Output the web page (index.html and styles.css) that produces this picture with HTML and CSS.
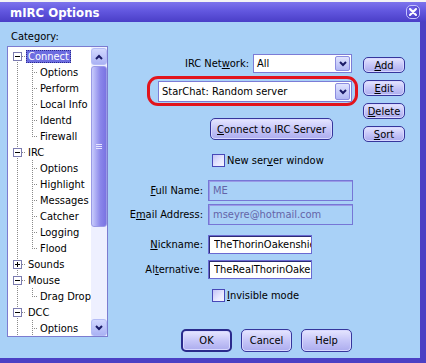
FILE: index.html
```html
<!DOCTYPE html>
<html lang="en">
<head>
  <meta charset="UTF-8" />
  <meta name="viewport" content="width=device-width, initial-scale=1" />
  <title>mIRC Options</title>
  <link rel="stylesheet" href="styles.css">
</head>
<body>

  <div class="window">
    <div class="titlebar">
      <span class="title">mIRC Options</span>
      <span class="close-btn">
        <svg width="8" height="8" viewBox="0 0 8 8"><path d="M1 1L7 7M7 1L1 7" stroke="#fff" stroke-width="2" stroke-linecap="round"/></svg>
      </span>
    </div>

    <div class="content">
      <!-- Lista de categorias -->
      <div class="category">
        <div class="cat-label">Category:</div>
        <div class="tree">
          <ul class="tree-list">
            <li class="node first"><span class="gutter"><svg class="toggle" width="9" height="9" viewBox="0 0 9 9"><rect x="0.5" y="0.5" width="8" height="8" fill="#fff" stroke="#7c7cb0"/><path d="M2 4.5h5" stroke="#000"/></svg></span><span class="label selected">Connect</span></li>
            <li class="leaf"><span class="gutter"></span><span class="branch"></span><span class="label">Options</span></li>
            <li class="leaf"><span class="gutter"></span><span class="branch"></span><span class="label">Perform</span></li>
            <li class="leaf"><span class="gutter"></span><span class="branch"></span><span class="label">Local Info</span></li>
            <li class="leaf"><span class="gutter"></span><span class="branch"></span><span class="label">Identd</span></li>
            <li class="leaf last"><span class="gutter"></span><span class="branch"></span><span class="label">Firewall</span></li>
            <li class="node"><span class="gutter"><svg class="toggle" width="9" height="9" viewBox="0 0 9 9"><rect x="0.5" y="0.5" width="8" height="8" fill="#fff" stroke="#7c7cb0"/><path d="M2 4.5h5" stroke="#000"/></svg></span><span class="label">IRC</span></li>
            <li class="leaf"><span class="gutter"></span><span class="branch"></span><span class="label">Options</span></li>
            <li class="leaf"><span class="gutter"></span><span class="branch"></span><span class="label">Highlight</span></li>
            <li class="leaf"><span class="gutter"></span><span class="branch"></span><span class="label">Messages</span></li>
            <li class="leaf"><span class="gutter"></span><span class="branch"></span><span class="label">Catcher</span></li>
            <li class="leaf"><span class="gutter"></span><span class="branch"></span><span class="label">Logging</span></li>
            <li class="leaf last"><span class="gutter"></span><span class="branch"></span><span class="label">Flood</span></li>
            <li class="node"><span class="gutter"><svg class="toggle" width="9" height="9" viewBox="0 0 9 9"><rect x="0.5" y="0.5" width="8" height="8" fill="#fff" stroke="#7c7cb0"/><path d="M2 4.5h5M4.5 2v5" stroke="#000"/></svg></span><span class="label">Sounds</span></li>
            <li class="node"><span class="gutter"><svg class="toggle" width="9" height="9" viewBox="0 0 9 9"><rect x="0.5" y="0.5" width="8" height="8" fill="#fff" stroke="#7c7cb0"/><path d="M2 4.5h5" stroke="#000"/></svg></span><span class="label">Mouse</span></li>
            <li class="leaf last"><span class="gutter"></span><span class="branch"></span><span class="label">Drag Drop</span></li>
            <li class="node"><span class="gutter"><svg class="toggle" width="9" height="9" viewBox="0 0 9 9"><rect x="0.5" y="0.5" width="8" height="8" fill="#fff" stroke="#7c7cb0"/><path d="M2 4.5h5" stroke="#000"/></svg></span><span class="label">DCC</span></li>
            <li class="leaf"><span class="gutter"></span><span class="branch"></span><span class="label">Options</span></li>
          </ul>
          <div class="scrollbar">
            <span class="scroll-btn">
              <svg width="8" height="6" viewBox="0 0 8 6"><path d="M1 5L4 2L7 5" fill="none" stroke="#1a1a66" stroke-width="2"/></svg>
            </span>
            <span class="thumb">
              <svg width="6" height="5" viewBox="0 0 6 5"><path d="M0 0.5h6M0 2.5h6M0 4.5h6" stroke="#e6e6ff"/></svg>
            </span>
            <span class="track"></span>
            <span class="scroll-btn">
              <svg width="8" height="6" viewBox="0 0 8 6"><path d="M1 1L4 4L7 1" fill="none" stroke="#1a1a66" stroke-width="2"/></svg>
            </span>
          </div>
        </div>
      </div>

      <!-- Painel de conexão -->
      <div class="pane">
        <div class="top-section">
          <div class="server-area">
            <div class="net-row">
              <span>IRC Net<u>w</u>ork:</span>
              <div class="combo network">
                <span class="combo-text">All</span>
                <span class="combo-btn"><svg width="8" height="6" viewBox="0 0 8 6"><path d="M1 1L4 4L7 1" fill="none" stroke="#1a1a66" stroke-width="2"/></svg></span>
              </div>
            </div>
            <div class="red-box">
              <div class="combo server">
                <span class="combo-text">StarChat: Random server</span>
                <span class="combo-btn"><svg width="8" height="6" viewBox="0 0 8 6"><path d="M1 1L4 4L7 1" fill="none" stroke="#1a1a66" stroke-width="2"/></svg></span>
              </div>
            </div>
            <button class="btn connect-btn"><u>C</u>onnect to IRC Server</button>
          </div>
          <div class="side-buttons">
            <button class="btn small"><u>A</u>dd</button>
            <button class="btn small"><u>E</u>dit</button>
            <button class="btn small"><u>D</u>elete</button>
            <button class="btn small"><u>S</u>ort</button>
          </div>
        </div>

        <div class="check-row server-window">
          <span class="checkbox"></span>
          <span>New ser<u>v</u>er window</span>
        </div>

        <div class="field-row full-name">
          <label><u>F</u>ull Name:</label>
          <input class="input disabled" type="text" value="ME" disabled />
        </div>
        <div class="field-row email">
          <label>E<u>m</u>ail Address:</label>
          <input class="input disabled" type="text" value="mseyre@hotmail.com" disabled />
        </div>
        <div class="field-row nickname">
          <label><u>N</u>ickname:</label>
          <input class="input" type="text" value="TheThorinOakenshield" />
        </div>
        <div class="field-row alternative">
          <label>Al<u>t</u>ernative:</label>
          <input class="input" type="text" value="TheRealThorinOakenshield" />
        </div>

        <div class="check-row invisible">
          <span class="checkbox"></span>
          <span><u>I</u>nvisible mode</span>
        </div>

        <div class="dialog-buttons">
          <button class="btn dialog default">OK</button>
          <button class="btn dialog">Cancel</button>
          <button class="btn dialog">Help</button>
        </div>
      </div>
    </div>
  </div>

</body>
</html>
```

FILE: styles.css
```css
body {
  margin: 0;
  background: #f4f4f4;
  font-family: Tahoma, "DejaVu Sans Condensed", "DejaVu Sans", sans-serif;
  font-size: 11px;
  color: #000;
}
.window {
  width: 426px;
  height: 361px;
  margin-top: 2px;
  display: flex;
  flex-direction: column;
}
.titlebar {
  height: 20px;
  flex-shrink: 0;
  display: flex;
  align-items: center;
  padding: 0 6px 0 10px;
  background: linear-gradient(to bottom, #7d74ec 0%, #6257df 45%, #4a3ec7 100%);
}
.title {
  color: #fff;
  font-weight: bold;
  font-size: 13px;
}
.close-btn {
  margin-left: auto;
  width: 12px;
  height: 12px;
  display: flex;
  align-items: center;
  justify-content: center;
  border: 1px solid #c4c4ff;
  border-radius: 5px;
  background: radial-gradient(circle at 40% 35%, #7a6ef2, #3b2db8);
}
.content {
  flex: 1;
  display: flex;
  background: #a9d1f7;
  border-right: 6px solid #4b40c4;
  border-bottom: 5px solid #4b40c4;
}

/* Categorias */
.category {
  padding-left: 7px;
  width: 101px;
}
.cat-label {
  padding: 8px 0 3px 4px;
  line-height: 13px;
}
.tree {
  height: 291px;
  box-sizing: border-box;
  border: 1px solid #7c7cd0;
  background: #fff;
  display: flex;
}
.tree-list {
  list-style: none;
  margin: 0;
  padding: 1px 0 0 0;
  flex: 1;
  overflow: hidden;
}
.tree-list li {
  display: flex;
  height: 16px;
  white-space: nowrap;
}
.gutter {
  width: 18px;
  height: 16px;
  flex-shrink: 0;
  box-sizing: border-box;
}
.node .gutter {
  padding: 4px 0 0 5px;
  background:
    repeating-linear-gradient(to bottom, #8a8a8a 0 1px, transparent 1px 2px) 9px 0 / 1px 100% no-repeat,
    repeating-linear-gradient(to right, #8a8a8a 0 1px, transparent 1px 2px) 14px 8px / 4px 1px no-repeat;
}
.node.first .gutter {
  background-position: 9px 8px, 14px 8px;
  background-size: 1px 8px, 4px 1px;
}
.toggle {
  display: block;
}
.leaf .gutter {
  background: repeating-linear-gradient(to bottom, #8a8a8a 0 1px, transparent 1px 2px) 9px 0 / 1px 100% no-repeat;
}
.branch {
  width: 12px;
  height: 16px;
  flex-shrink: 0;
  background:
    repeating-linear-gradient(to bottom, #8a8a8a 0 1px, transparent 1px 2px) 6px 0 / 1px 100% no-repeat,
    repeating-linear-gradient(to right, #8a8a8a 0 1px, transparent 1px 2px) 6px 8px / 6px 1px no-repeat;
}
.leaf.last .branch {
  background-size: 1px 9px, 6px 1px;
}
.label {
  margin-top: 2px;
  padding: 0 2px;
  height: 13px;
  line-height: 13px;
}
.label.selected {
  background: #6d6de0;
  color: #fff;
  outline: 1px dotted #2a2a90;
  outline-offset: -1px;
}
.scrollbar {
  width: 16px;
  flex-shrink: 0;
  display: flex;
  flex-direction: column;
  padding-top: 1px;
  background: #eef0ff;
}
.scroll-btn {
  height: 17px;
  box-sizing: border-box;
  display: flex;
  align-items: center;
  justify-content: center;
  border: 1px solid #b4bcf6;
  border-radius: 3px;
  background: linear-gradient(to bottom, #d2d8ff, #aab2f4);
}
.thumb {
  margin-top: 1px;
  height: 161px;
  box-sizing: border-box;
  display: flex;
  align-items: center;
  justify-content: center;
  border: 1px solid #9a9ae6;
  border-radius: 3px;
  background: linear-gradient(to right, #c8ccfc, #8a86ea 60%, #7a74e2);
}
.track {
  flex: 1;
}

/* Painel */
.pane {
  margin-left: 12px;
  padding-top: 32px;
  display: flex;
  flex-direction: column;
}
.top-section {
  display: flex;
}
.server-area {
  width: 211px;
  margin-left: 27px;
  display: flex;
  flex-direction: column;
  align-items: flex-start;
}
.net-row {
  align-self: stretch;
  display: flex;
  justify-content: flex-end;
  align-items: center;
  gap: 4px;
  padding-right: 6px;
}
.combo {
  display: flex;
  box-sizing: border-box;
  border: 1px solid #7c7cd6;
  background: #fff;
}
.combo.network {
  width: 99px;
  height: 19px;
}
.combo.server {
  width: 194px;
  height: 21px;
}
.combo-text {
  flex: 1;
  padding-left: 3px;
  align-self: center;
}
.combo-btn {
  width: 15px;
  margin: 1px;
  box-sizing: border-box;
  display: flex;
  align-items: center;
  justify-content: center;
  border: 1px solid #8c8ce0;
  border-radius: 2px;
  background: linear-gradient(to bottom, #e0e4ff, #b0b6f4);
}
.red-box {
  margin-top: 3px;
  border: 3px solid #e2141c;
  border-radius: 11px;
  padding: 2px 3px 1px 8px;
}
.btn {
  font-family: inherit;
  font-size: 11px;
  color: #000;
  padding: 0;
  box-sizing: border-box;
  border: 1px solid #36369c;
  border-radius: 5px;
  background: linear-gradient(to bottom, #e6e6ff 0%, #c6c6f8 50%, #acacee 100%);
  box-shadow: inset 0 0 0 1px #d8d8ff;
}
.connect-btn {
  margin-top: 12px;
  margin-left: 63px;
  width: 123px;
  height: 22px;
}
.side-buttons {
  margin-left: 5px;
  margin-top: 3px;
  display: flex;
  flex-direction: column;
  gap: 7px;
}
.btn.small {
  width: 42px;
  height: 16px;
  line-height: 13px;
}
.check-row {
  margin-left: 92px;
  height: 14px;
  display: flex;
  align-items: center;
  gap: 2px;
}
.check-row.server-window {
  margin-top: 11px;
}
.check-row.invisible {
  margin-top: 9px;
}
.checkbox {
  width: 13px;
  height: 13px;
  box-sizing: border-box;
  border: 1px solid #4848b8;
  background: linear-gradient(135deg, #c4c4f6, #e8e8ff 60%, #f4f4ff);
}
.field-row {
  display: flex;
  align-items: center;
  gap: 5px;
}
.field-row label {
  width: 83px;
  text-align: right;
}
.field-row.full-name {
  margin-top: 13px;
}
.field-row.email {
  margin-top: 3px;
}
.field-row.nickname {
  margin-top: 10px;
}
.field-row.alternative {
  margin-top: 6px;
}
.input {
  font-family: inherit;
  font-size: 11px;
  margin: 0;
  box-sizing: border-box;
  width: 104px;
  height: 19px;
  padding: 0 0 0 5px;
  border: 1px solid #6a6ad2;
  box-shadow: inset 1px 1px 0 #2c2c74;
  background: #fff;
  color: #000;
}
.input.disabled {
  width: 145px;
  height: 21px;
  padding-left: 4px;
  background: transparent;
  border-color: #7676d6;
  box-shadow: inset 1px 1px 0 #9a9ae6;
  color: #6464a8;
}
.dialog-buttons {
  margin-top: 27px;
  margin-left: 61px;
  display: flex;
  gap: 9px;
}
.btn.dialog {
  width: 51px;
  height: 23px;
}
.btn.default {
  border: 2px solid #2a2a8c;
}
```
